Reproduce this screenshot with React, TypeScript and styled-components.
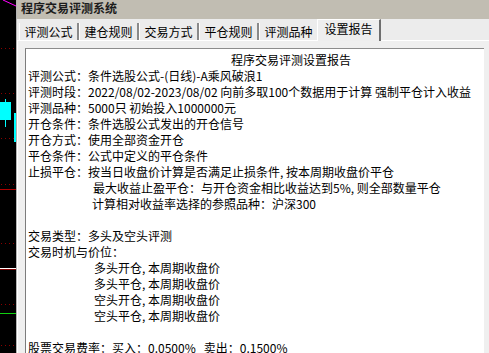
import React from "react";
import styled, { createGlobalStyle } from "styled-components";

const Global = createGlobalStyle`
  html, body { margin: 0; padding: 0; background: #ececec; overflow: hidden; }
  body { font-family: "Noto Sans CJK SC", "Noto Sans", sans-serif; }
`;

const Screen = styled.div`
  display: flex;
  width: 489px;
  height: 353px;
  overflow: hidden;
`;

const ChartStrip = styled.svg`
  display: block;
  flex: 0 0 16px;
  width: 16px;
  height: 353px;
  background: #000;
`;

const Dialog = styled.div`
  flex: 1;
  display: flex;
  flex-direction: column;
  border-left: 1px solid #b4b4b4;
  background: #ececec;
  min-width: 0;
`;

const TitleBar = styled.div`
  height: 19px;
  box-sizing: border-box;
  padding: 0 0 0 4px;
  background: #c1bdb2;
  color: #1c1c1c;
  font-weight: bold;
  font-size: 12px;
  line-height: 15px;
  white-space: nowrap;
`;

const TabStrip = styled.div`
  height: 21px;
  display: flex;
  align-items: flex-end;
  padding-left: 2px;
  background: #ececec;
`;

const Tab = styled.div<{ $active?: boolean }>`
  box-sizing: border-box;
  position: relative;
  font-size: 12px;
  color: #000;
  text-align: center;
  white-space: nowrap;
  background: #ececec;
  border-left: 1px solid #fff;
  ${(p) =>
    p.$active
      ? `
    width: 64px;
    height: 22px;
    line-height: 18px;
    margin: 0 -2px -1px -2px;
    border-top: 1px solid #fff;
    border-right: 2px solid #6e6e6e;
    z-index: 1;
    background: #eeeeee;
  `
      : `
    width: 60px;
    height: 17px;
    line-height: 17px;
    border-right: 2px solid #8a8a8a;
  `}
`;

const Panel = styled.div`
  flex: 1;
  display: flex;
  min-height: 0;
  border-top: 1px solid #fff;
  border-left: 1px solid #fff;
  padding: 7px 5px 0 7px;
  background: #efefef;
`;

const ReportBox = styled.div`
  flex: 1;
  background: #fff;
  border-top: 1px solid #8c8c8c;
  border-left: 1px solid #7c7c7c;
  padding: 3px 0 0 2px;
  overflow: hidden;
`;

const Line = styled.div<{ $indent?: number }>`
  height: 16px;
  line-height: 16px;
  font-size: 12px;
  color: #000;
  white-space: pre;
  padding-left: ${(p) => p.$indent ?? 0}px;
`;

const tabs = ["评测公式", "建仓规则", "交易方式", "平仓规则", "评测品种", "设置报告"];

const lines: { text: string; indent?: number }[] = [
  { text: "程序交易评测设置报告", indent: 203 },
  { text: "评测公式：条件选股公式-(日线)-A乘风破浪1" },
  { text: "评测时段：2022/08/02-2023/08/02 向前多取100个数据用于计算 强制平仓计入收益" },
  { text: "评测品种：5000只 初始投入1000000元" },
  { text: "开仓条件：条件选股公式发出的开仓信号" },
  { text: "开仓方式：使用全部资金开仓" },
  { text: "平仓条件：公式中定义的平仓条件" },
  { text: "止损平仓：按当日收盘价计算是否满足止损条件, 按本周期收盘价平仓" },
  { text: "最大收益止盈平仓：与开仓资金相比收益达到5%, 则全部数量平仓", indent: 65 },
  { text: "计算相对收益率选择的参照品种：沪深300", indent: 64 },
  { text: "" },
  { text: "交易类型：多头及空头评测" },
  { text: "交易时机与价位：" },
  { text: "多头开仓, 本周期收盘价", indent: 66 },
  { text: "多头平仓, 本周期收盘价", indent: 66 },
  { text: "空头开仓, 本周期收盘价", indent: 66 },
  { text: "空头平仓, 本周期收盘价", indent: 66 },
  { text: "" },
  { text: "股票交易费率：买入：0.0500%   卖出：0.1500%" },
];

const dottedRows = [48, 93, 138, 184, 243, 304, 345];

function Chart() {
  return (
    <ChartStrip viewBox="0 0 16 353" width={16} height={353}>
      <line x1={3} y1={0} x2={16} y2={6} stroke="#ff00ff" strokeWidth={1} />
      {dottedRows.map((y) => (
        <line
          key={y}
          x1={1}
          y1={y + 0.5}
          x2={16}
          y2={y + 0.5}
          stroke="#8a0000"
          strokeWidth={1}
          strokeDasharray="1 3"
        />
      ))}
      <line x1={5.5} y1={99} x2={5.5} y2={127} stroke="#00ffff" strokeWidth={1} />
      <rect x={0} y={102} width={11} height={18} fill="#00ffff" />
      <rect x={14} y={113} width={2} height={29} fill="#00ffff" />
      <line x1={0} y1={189.5} x2={16} y2={189.5} stroke="#b00000" strokeWidth={1} />
      <line x1={0} y1={268.5} x2={16} y2={268.5} stroke="#ffffff" strokeWidth={1} />
      <line x1={0} y1={269.5} x2={16} y2={269.5} stroke="#800000" strokeWidth={1} />
      <line x1={0} y1={313.5} x2={16} y2={313.5} stroke="#10d010" strokeWidth={1} />
    </ChartStrip>
  );
}

export default function App() {
  return (
    <>
      <Global />
      <Screen>
        <Chart />
        <Dialog>
          <TitleBar>程序交易评测系统</TitleBar>
          <TabStrip>
            {tabs.map((t, i) => (
              <Tab key={t} $active={i === tabs.length - 1}>
                {t}
              </Tab>
            ))}
          </TabStrip>
          <Panel>
            <ReportBox>
              {lines.map((l, i) => (
                <Line key={i} $indent={l.indent}>
                  {l.text}
                </Line>
              ))}
            </ReportBox>
          </Panel>
        </Dialog>
      </Screen>
    </>
  );
}
